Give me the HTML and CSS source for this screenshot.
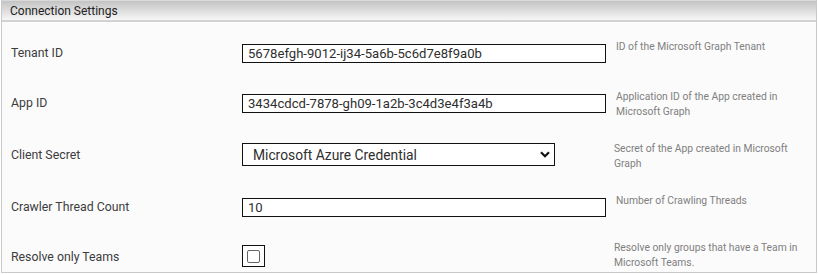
FILE: index.html
```html
<!DOCTYPE html>
<html>
<head>
  <title>Connection Settings</title>
  <link rel="stylesheet" href="styles.css">
</head>
<body>
  <div class="settings-box">
    <div class="settings-header">Connection Settings</div>

    <div class="settings-body">
      <div class="setting-row">
        <div class="setting-label">Tenant ID</div>
        <div class="setting-field">
          <input class="text-input" type="text" value="5678efgh-9012-ij34-5a6b-5c6d7e8f9a0b">
        </div>
        <div class="setting-desc">ID of the Microsoft Graph Tenant</div>
      </div>

      <div class="setting-row row-tall">
        <div class="setting-label">App ID</div>
        <div class="setting-field">
          <input class="text-input" type="text" value="3434cdcd-7878-gh09-1a2b-3c4d3e4f3a4b">
        </div>
        <div class="setting-desc">Application ID of the App created in Microsoft Graph</div>
      </div>

      <div class="setting-row row-tall row-select">
        <div class="setting-label">Client Secret</div>
        <div class="setting-field">
          <div class="select-box">
            <span>Microsoft Azure Credential</span>
            <svg class="select-arrow" width="10" height="7" viewBox="0 0 10 7">
              <path d="M1 1.2 L5 5.2 L9 1.2" fill="none" stroke="#111" stroke-width="2.2"/>
            </svg>
          </div>
        </div>
        <div class="setting-desc desc-narrow">Secret of the App created in Microsoft Graph</div>
      </div>

      <div class="setting-row">
        <div class="setting-label">Crawler Thread Count</div>
        <div class="setting-field">
          <input class="text-input" type="text" value="10">
        </div>
        <div class="setting-desc">Number of Crawling Threads</div>
      </div>

      <div class="setting-row row-last">
        <div class="setting-label">Resolve only Teams</div>
        <div class="setting-field">
          <span class="check-box"><span class="check-inner"></span></span>
        </div>
        <div class="setting-desc desc-narrow">Resolve only groups that have a Team in Microsoft Teams.</div>
      </div>
    </div>
  </div>
</body>
</html>
```

FILE: styles.css
```css
:root {
  --box-border: #c9c9c9;
  --body-bg: #fbfbfb;
  --label-text: #3c3c3c;
  --desc-text: #808080;
  --input-text: #2e2e2e;
}

body {
  margin: 0;
  padding: 0;
  background: #fff;
  font-family: Roboto, "Liberation Sans", sans-serif;
}

.settings-box {
  width: 814px;
  margin-left: 1px;
  border: 1px solid var(--box-border);
  border-top: 0;
  background: var(--body-bg);
}

.settings-header {
  height: 19px;
  padding-left: 8px;
  border-top: 1px solid #d9d9d9;
  border-bottom: 2px solid #d2d2d2;
  background: linear-gradient(#c4c4c4, #f6f6f6);
  font-size: 12px;
  line-height: 20px;
  color: #222;
}

.settings-body {
  padding-top: 16px;
}

.setting-row {
  display: flex;
  align-items: flex-start;
  height: 50px;
}

.row-tall {
  height: 52px;
}

.row-last {
  height: 30px;
}

.setting-label {
  width: 231px;
  padding-left: 9px;
  padding-top: 8px;
  font-size: 12.3px;
  color: var(--label-text);
}

.setting-field {
  width: 374px;
  padding-top: 5px;
}

.row-last .setting-field {
  padding-top: 3px;
}

.text-input {
  box-sizing: border-box;
  width: 364px;
  height: 19px;
  margin: 0;
  padding: 0 0 0 5px;
  border: 1px solid #111;
  background: #fff;
  font-family: Roboto, "Liberation Sans", sans-serif;
  font-size: 13.1px;
  color: var(--input-text);
  outline: none;
}

.select-box {
  box-sizing: border-box;
  display: flex;
  align-items: center;
  justify-content: space-between;
  width: 313px;
  height: 23px;
  margin-top: -2px;
  padding: 0 4px 0 10px;
  border: 1px solid #111;
  background: #fff;
  font-size: 13.8px;
  color: var(--input-text);
}

.check-box {
  box-sizing: border-box;
  display: flex;
  align-items: center;
  justify-content: center;
  width: 23px;
  height: 22px;
  border: 1px solid #111;
  background: #fff;
}

.check-inner {
  box-sizing: border-box;
  width: 13px;
  height: 13px;
  border: 1px solid #666;
  border-radius: 2px;
}

.setting-desc {
  width: 190px;
  font-size: 10.3px;
  line-height: 15px;
  padding-top: 1px;
  color: var(--desc-text);
}

.desc-narrow {
  margin-left: -2px;
}

.row-last .setting-desc {
  padding-top: 0;
  margin-top: -2px;
}
```
